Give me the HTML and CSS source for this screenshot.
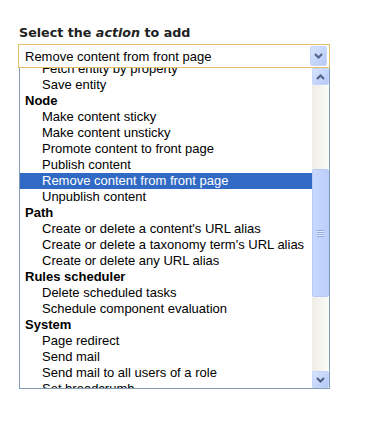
FILE: index.html
```html
<!DOCTYPE html>
<html lang="en">
<head>
    <meta charset="UTF-8">
    <title>Select the action to add</title>
    <link rel="stylesheet" href="styles.css">
</head>
<body>

<div class="panel">
    <div class="caption">Select the <em>action</em> to add</div>

    <div class="picker">
        <span class="picker-value">Remove content from front page</span>
        <span class="arrow-btn picker-btn">
            <svg width="9" height="6" viewBox="0 0 9 6"><polyline points="1,1 4.5,4.5 8,1" fill="none" stroke="#4d6185" stroke-width="2"/></svg>
        </span>
    </div>

    <div class="dropdown">
        <ul class="options">
            <li class="item first">Fetch entity by property</li>
            <li class="item">Save entity</li>
            <li class="group">Node</li>
            <li class="item">Make content sticky</li>
            <li class="item">Make content unsticky</li>
            <li class="item">Promote content to front page</li>
            <li class="item">Publish content</li>
            <li class="item selected">Remove content from front page</li>
            <li class="item">Unpublish content</li>
            <li class="group">Path</li>
            <li class="item">Create or delete a content's URL alias</li>
            <li class="item">Create or delete a taxonomy term's URL alias</li>
            <li class="item">Create or delete any URL alias</li>
            <li class="group">Rules scheduler</li>
            <li class="item">Delete scheduled tasks</li>
            <li class="item">Schedule component evaluation</li>
            <li class="group">System</li>
            <li class="item">Page redirect</li>
            <li class="item">Send mail</li>
            <li class="item">Send mail to all users of a role</li>
            <li class="item">Set breadcrumb</li>
        </ul>

        <div class="scrollbar">
            <span class="arrow-btn">
                <svg width="9" height="6" viewBox="0 0 9 6"><polyline points="1,5 4.5,1.5 8,5" fill="none" stroke="#4d6185" stroke-width="2"/></svg>
            </span>
            <div class="track">
                <div class="thumb">
                    <span class="grip"></span>
                </div>
            </div>
            <span class="arrow-btn">
                <svg width="9" height="6" viewBox="0 0 9 6"><polyline points="1,1 4.5,4.5 8,1" fill="none" stroke="#4d6185" stroke-width="2"/></svg>
            </span>
        </div>
    </div>
</div>

</body>
</html>
```

FILE: styles.css
```css
body {
    margin: 0;
    background: #fff;
    font-family: 'Liberation Sans', Arial, sans-serif;
    color: #000;
}
.panel {
    padding: 26px 0 0 18px;
    width: 312px;
}
.caption {
    font-family: 'DejaVu Sans', Verdana, sans-serif;
    font-weight: bold;
    font-size: 12.7px;
    color: #222;
    padding-left: 1px;
    margin-bottom: 4px;
    line-height: 14px;
}
.caption em {
    font-style: italic;
}
.picker {
    height: 22px;
    border: 1px solid #e3bd68;
    display: flex;
    align-items: center;
    justify-content: space-between;
    padding: 0 2px 0 6px;
    font-size: 13px;
}
.arrow-btn {
    width: 15px;
    height: 15px;
    border: 1px solid #c6d6fb;
    border-radius: 2px;
    background: linear-gradient(135deg, #d8e4fd, #b4c9f7);
    display: flex;
    align-items: center;
    justify-content: center;
}
.picker-btn {
    height: 18px;
}
.dropdown {
    margin-left: 1px;
    height: 320px;
    border: 1px solid #7f9db9;
    border-top: none;
    display: flex;
    overflow: hidden;
}
.options {
    list-style: none;
    margin: 0;
    padding: 0;
    flex: 1;
    font-size: 13px;
}
.options li {
    height: 16px;
    line-height: 16px;
    white-space: nowrap;
}
.options .first {
    margin-top: -7px;
}
.group {
    font-weight: bold;
    padding-left: 5px;
}
.item {
    padding-left: 22px;
}
.item.selected {
    background: #316ac5;
    color: #fff;
}
.scrollbar {
    width: 17px;
    display: flex;
    flex-direction: column;
    background: linear-gradient(90deg, #eeede5, #fbfbf8);
}
.track {
    flex: 1;
    padding-top: 84px;
}
.thumb {
    height: 126px;
    border: 1px solid #b8cbf5;
    border-radius: 2px;
    background: linear-gradient(90deg, #c9d8fc, #bccefa);
    display: flex;
    align-items: center;
    justify-content: center;
}
.grip {
    width: 7px;
    height: 7px;
    background: repeating-linear-gradient(180deg, #8fa9e9 0, #8fa9e9 1px, #e6edfd 1px, #e6edfd 2px);
}
```
